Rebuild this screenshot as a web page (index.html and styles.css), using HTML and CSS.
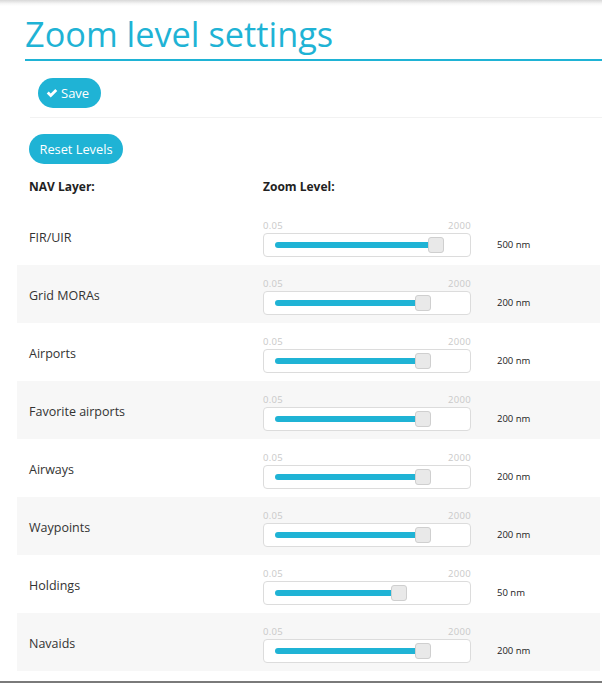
FILE: index.html
```html
<!DOCTYPE html>
<html>
<head>
<meta charset="utf-8">
<link rel="stylesheet" href="styles.css">
</head>
<body>
<div class="topshadow"></div>
<h1 class="title">Zoom level settings</h1>
<div class="toolbar">
  <button class="btn btn-save"><svg class="check" viewBox="0 0 16 16" width="12" height="12"><path d="M1 8.6 L3.6 6 L6.3 8.7 L12.4 2.6 L15 5.2 L6.3 13.9 Z" fill="#fff"/></svg>Save</button>
</div>
<div class="reset-wrap"><button class="btn btn-reset">Reset Levels</button></div>
<div class="head-row">
  <div class="col-name">NAV Layer:</div>
  <div class="col-zoom">Zoom Level:</div>
</div>
<div class="rows">
  <div class="row"><div class="col-name">FIR/UIR</div><div class="slider"><div class="ticks"><span>0.05</span><span>2000</span></div><div class="box"><div class="rail"><div class="fill" style="width:161px"></div><div class="thumb" style="left:153px"></div></div></div></div><div class="val">500 nm</div></div>
  <div class="row alt"><div class="col-name">Grid MORAs</div><div class="slider"><div class="ticks"><span>0.05</span><span>2000</span></div><div class="box"><div class="rail"><div class="fill" style="width:148px"></div><div class="thumb" style="left:140px"></div></div></div></div><div class="val">200 nm</div></div>
  <div class="row"><div class="col-name">Airports</div><div class="slider"><div class="ticks"><span>0.05</span><span>2000</span></div><div class="box"><div class="rail"><div class="fill" style="width:148px"></div><div class="thumb" style="left:140px"></div></div></div></div><div class="val">200 nm</div></div>
  <div class="row alt"><div class="col-name">Favorite airports</div><div class="slider"><div class="ticks"><span>0.05</span><span>2000</span></div><div class="box"><div class="rail"><div class="fill" style="width:148px"></div><div class="thumb" style="left:140px"></div></div></div></div><div class="val">200 nm</div></div>
  <div class="row"><div class="col-name">Airways</div><div class="slider"><div class="ticks"><span>0.05</span><span>2000</span></div><div class="box"><div class="rail"><div class="fill" style="width:148px"></div><div class="thumb" style="left:140px"></div></div></div></div><div class="val">200 nm</div></div>
  <div class="row alt"><div class="col-name">Waypoints</div><div class="slider"><div class="ticks"><span>0.05</span><span>2000</span></div><div class="box"><div class="rail"><div class="fill" style="width:148px"></div><div class="thumb" style="left:140px"></div></div></div></div><div class="val">200 nm</div></div>
  <div class="row"><div class="col-name">Holdings</div><div class="slider"><div class="ticks"><span>0.05</span><span>2000</span></div><div class="box"><div class="rail"><div class="fill" style="width:124px"></div><div class="thumb" style="left:116px"></div></div></div></div><div class="val">50 nm</div></div>
  <div class="row alt"><div class="col-name">Navaids</div><div class="slider"><div class="ticks"><span>0.05</span><span>2000</span></div><div class="box"><div class="rail"><div class="fill" style="width:148px"></div><div class="thumb" style="left:140px"></div></div></div></div><div class="val">200 nm</div></div>
</div>
<div class="bottom-line"></div>
</body>
</html>
```
FILE: styles.css
```css
html, body {
  margin: 0;
  padding: 0;
  background: #fff;
}
body {
  font-family: "Open Sans", "Noto Sans", sans-serif;
  color: #333;
  width: 602px;
  height: 683px;
  overflow: hidden;
}
.topshadow {
  height: 6px;
  background: linear-gradient(#d8d8d8, #f6f6f6 60%, #fff);
}
.title {
  margin: 5px 0 0 25px;
  padding: 0 0 3px 0;
  font-weight: 400;
  font-size: 34.3px;
  line-height: 45px;
  color: #1fb3d5;
  border-bottom: 2px solid #1fb3d5;
}
.toolbar {
  margin-left: 30px;
  padding: 17px 0 9px 8px;
  border-bottom: 1px solid #f2f2f2;
  display: flex;
}
.btn {
  border: none;
  background: #1fb3d5;
  color: #fff;
  font-family: "Open Sans", "Noto Sans", sans-serif;
  font-size: 12.8px;
  height: 30px;
  border-radius: 15px;
  padding: 0 10px;
  display: flex;
  align-items: center;
  cursor: pointer;
}
.btn-save {
  width: 63px;
  padding: 0 8px;
  gap: 3px;
  font-size: 13px;
}
.check {
  display: block;
}
.reset-wrap {
  margin: 16px 0 0 29px;
  display: flex;
}
.btn-reset {
  width: 94px;
  justify-content: center;
}
.head-row {
  display: flex;
  padding: 14px 0 11px 29px;
  line-height: 18px;
  font-size: 12px;
  font-weight: 700;
  color: #222;
}
.head-row .col-name {
  width: 234px;
}
.rows {
  margin-left: 17px;
  margin-right: 2px;
}
.row {
  height: 58px;
  display: flex;
  align-items: stretch;
  padding-left: 12px;
  font-size: 12.5px;
}
.row.alt {
  background: #f7f7f7;
}
.row .col-name {
  width: 234px;
  display: flex;
  align-items: center;
  padding-top: 2px;
  box-sizing: border-box;
}
.slider {
  width: 208px;
  display: flex;
  flex-direction: column;
  padding-top: 13px;
}
.ticks {
  display: flex;
  justify-content: space-between;
  font-size: 9.5px;
  line-height: 12px;
  color: #c9c9c9;
  letter-spacing: 0.3px;
}
.box {
  margin-top: 1px;
  height: 22px;
  border: 1px solid #dcdcdc;
  border-radius: 4px;
  background: #fff;
  padding: 0 11px;
  display: flex;
  align-items: center;
}
.rail {
  position: relative;
  flex: 1;
  height: 6px;
}
.fill {
  height: 6px;
  border-radius: 3px;
  background: #1fb3d5;
}
.thumb {
  position: absolute;
  top: -5px;
  width: 14px;
  height: 14px;
  border: 1px solid #cfcfcf;
  border-radius: 3px;
  background: #e9e9e9;
}
.val {
  margin-left: 26px;
  padding-top: 30px;
  font-size: 9.5px;
  line-height: 16px;
  color: #222;
}
.bottom-line {
  margin-top: 10px;
  height: 2px;
  background: #7a7a7a;
}
```
